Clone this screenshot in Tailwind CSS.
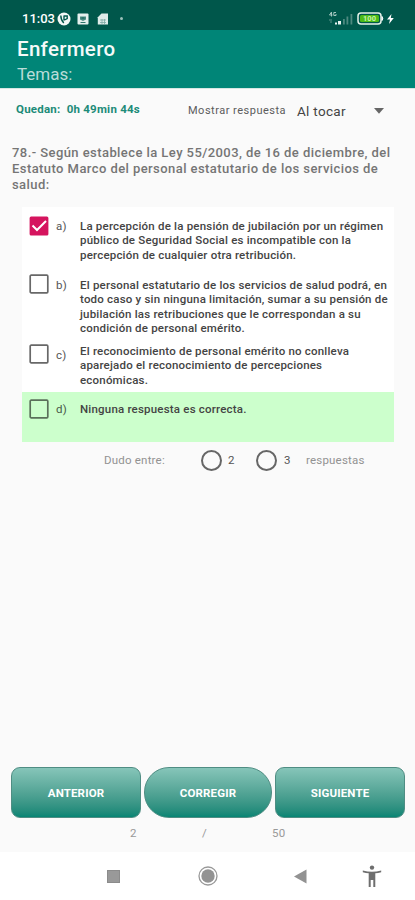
<!DOCTYPE html>
<html lang="es">
<head>
<meta charset="utf-8">
<title>Enfermero</title>
<script src="https://cdn.jsdelivr.net/npm/@tailwindcss/browser@4"></script>
</head>
<body class="bg-[#fafafa] font-[Roboto,sans-serif]">
<div class="w-[415px] h-[900px] flex flex-col overflow-hidden whitespace-nowrap">
  <div class="h-[30px] shrink-0 bg-[#00574b] text-white flex items-center pl-[22px] pr-[20px] pt-[7px]">
    <span class="text-[13px] leading-4 font-medium w-[34px]">11:03</span>
    <svg class="ml-[1px]" width="14" height="14" viewBox="0 0 14 14"><circle cx="7" cy="7" r="6.500" fill="#f2f8f6"/><path d="M3.800 3.500c0 3.500.6 5 3 7.500M7 3.500v5M7 4h3.200v2.500L7.500 8" stroke="#00574b" stroke-width="1.400" fill="none"/></svg>
    <svg class="ml-[6px]" width="12" height="12" viewBox="0 0 12 12"><rect x=".5" y=".5" width="11" height="11" rx="1" fill="#e5f0ee"/><path d="M3 3.500h6v3l-3 1.500-3-1.500z" fill="#4b8b82"/><path d="M4.500 5h3M3.500 9.500h5" stroke="#00574b" stroke-width=".8"/></svg>
    <svg class="ml-[8px]" width="12" height="12" viewBox="0 0 12 12"><path d="M4.500.5H11v11H.8V4.200z" fill="#dfecea"/><path d="M3 7h6M3 9.500h6M5 6v5M7.500 6v5" stroke="#7eaaa4" stroke-width=".8"/></svg>
    <span class="ml-[11px] size-[3px] rounded-full bg-[#9bc0ba]"></span>
    <svg class="ml-auto" width="26" height="15" viewBox="0 0 26 15"><path d="M3.500 1L1.500 4h3M3.500 1v4.500M8 1.500H5.800v3H8V3" stroke="#a5c6c0" fill="none" stroke-width="1"/><path d="M1 9h3M2 11h2" stroke="#5d948b"/><path d="M7 11.500h2v2H7zM10 10h3v3.500h-3z" fill="#e8f3f1"/><path d="M15 8h1.800v5.500H15zM18.500 5.500h1.800v8h-1.800zM22.500 3h1.800v10.500h-1.800z" fill="#4e8980"/></svg>
    <svg class="ml-[3px]" width="27" height="13" viewBox="0 0 27 13"><rect x="1" y="1" width="23" height="11" rx="3" fill="#00574b" stroke="#e6f2ea" stroke-width="1.500"/><rect x="3" y="3" width="19" height="7" rx="1.500" fill="#4cbb17"/><path d="M25 4.500q1.500 2 0 4z" fill="#fff" stroke="#fff"/><text x="12.500" y="9.200" font-size="7.500" font-weight="700" fill="#c8f5ac" text-anchor="middle">100</text></svg>
    <svg class="ml-[2px]" width="9" height="12" viewBox="0 0 9 12"><path d="M5.500 1L1 6.500h3L3 11l4.800-6H4.800z" fill="#fff"/></svg>
  </div>
  <div class="h-[58px] shrink-0 bg-[#008577] pl-[17px] pt-[7px]">
    <div class="text-[20.5px] leading-[25px] font-medium text-[#f4faf9] tracking-[0.3px]">Enfermero</div>
    <div class="text-[17px] leading-[24px] text-[#b9dcd8] tracking-[0px]">Temas:</div>
  </div>
  <div class="h-[57px] shrink-0 flex pl-[16px] border-t border-[#d5e6e3]">
    <div class="w-[172px] pt-[13px] text-[11.5px] leading-[14px] font-bold text-[#1c8b78] tracking-[0.23px] whitespace-pre">Quedan:  0h 49min 44s</div>
    <div class="w-[109px] pt-[15px] text-[11px] leading-[14px] text-[#5c5c5c] tracking-[0.5px]">Mostrar respuesta</div>
    <div class="w-[77px] pt-[13px] text-[13.5px] leading-[18px] text-[#444] tracking-[0.3px]">Al tocar</div>
    <svg class="mt-[19px]" width="10" height="6" viewBox="0 0 10 6"><path d="M0 0h10L5 5.800z" fill="#666"/></svg>
  </div>
  <div class="h-[62px] shrink-0 pl-[12px] text-[13px] leading-[16px] font-medium text-[#757575] tracking-[0.43px]">
    <div>78.- Según establece la Ley 55/2003, de 16 de diciembre, del</div>
    <div>Estatuto Marco del personal estatutario de los servicios de</div>
    <div>salud:</div>
  </div>
  <div class="w-[372px] ml-[22px] shrink-0 text-[11.5px] leading-[14.3px] font-medium text-[#444] tracking-[0.2px]">
    <div class="h-[67px] bg-white flex pt-[12px]">
      <svg class="ml-[7px] -mt-[3px]" width="20" height="20" viewBox="0 0 20 20"><rect x=".6" y=".6" width="18.800" height="18.800" rx="1.500" fill="#d5145e"/><path d="M3.500 9.500l4.500 4.500L17 5" fill="none" stroke="#fff" stroke-width="2"/></svg>
      <span class="ml-[7px] w-[24px] font-normal text-[#555]">a)</span>
      <div>La percepción de la pensión de jubilación por un régimen<br>público de Seguridad Social es incompatible con la<br>percepción de cualquier otra retribución.</div>
    </div>
    <div class="h-[68px] bg-white flex pt-[4px]">
      <svg class="ml-[7px] -mt-[4px]" width="20" height="20" viewBox="0 0 20 20"><rect x="1.200" y="1.200" width="17.600" height="17.600" rx="1" fill="none" stroke="#686868" stroke-width="1.700"/></svg>
      <span class="ml-[7px] w-[24px] font-normal text-[#555]">b)</span>
      <div>El personal estatutario de los servicios de salud podrá, en<br>todo caso y sin ninguna limitación, sumar a su pensión de<br>jubilación las retribuciones que le correspondan a su<br>condición de personal emérito.</div>
    </div>
    <div class="h-[50px] bg-white flex pt-[2px]">
      <svg class="ml-[7px]" width="20" height="20" viewBox="0 0 20 20"><rect x="1.200" y="1.200" width="17.600" height="17.600" rx="1" fill="none" stroke="#686868" stroke-width="1.700"/></svg>
      <span class="ml-[7px] w-[24px] font-normal text-[#555] pt-[4px]">c)</span>
      <div>El reconocimiento de personal emérito no conlleva<br>aparejado el reconocimiento de percepciones<br>económicas.</div>
    </div>
    <div class="h-[50px] bg-[#ccffcc] flex pt-[7px]">
      <svg class="ml-[7px]" width="20" height="20" viewBox="0 0 20 20"><rect x="1.200" y="1.200" width="17.600" height="17.600" rx="1" fill="none" stroke="#5a705a" stroke-width="1.700"/></svg>
      <span class="ml-[7px] w-[24px] font-normal text-[#485848] pt-[3px]">d)</span>
      <div class="pt-[3px]">Ninguna respuesta es correcta.</div>
    </div>
  </div>
  <div class="h-[36px] shrink-0 flex items-center pl-[104px] text-[11.5px] text-[#929292] tracking-[0.2px]">
    <span class="w-[97px] pt-px">Dudo entre:</span>
    <span class="size-[21px] rounded-full border-2 border-[#666]"></span>
    <span class="ml-[6px] w-[28px] pt-px text-[#555]">2</span>
    <span class="size-[21px] rounded-full border-2 border-[#666]"></span>
    <span class="ml-[7px] w-[22px] pt-px text-[#555]">3</span>
    <span class="pt-px">respuestas</span>
  </div>
  <div class="flex-1"></div>
  <div class="h-[51px] shrink-0 flex gap-[3px] pl-[11px] text-[11.5px] font-bold text-white tracking-[0.15px]">
    <div class="w-[130px] rounded-[9px] border border-[#4f8d83] bg-linear-to-b from-[#86c5b9] to-[#058574] flex items-center justify-center pt-[2px]"><span>ANTERIOR</span></div>
    <div class="w-[128px] rounded-[25px] border border-[#4f8d83] bg-linear-to-b from-[#86c5b9] to-[#058574] flex items-center justify-center pt-[2px]"><span>CORREGIR</span></div>
    <div class="w-[130px] rounded-[9px] border border-[#4f8d83] bg-linear-to-b from-[#86c5b9] to-[#058574] flex items-center justify-center pt-[2px]"><span>SIGUIENTE</span></div>
  </div>
  <div class="h-[34px] shrink-0 flex pt-[8px] pl-[130px] text-[11.5px] leading-[14px] text-[#999] tracking-[0.2px]">
    <span class="w-[72px]">2</span><span class="w-[70px]">/</span><span>50</span>
  </div>
  <div class="h-[48px] shrink-0 bg-white flex items-center pl-[107px]">
    <span class="size-[13px] bg-[#999] border border-[#8b8b8b]"></span>
    <svg class="ml-[78px]" width="20" height="20" viewBox="0 0 20 20"><circle cx="10" cy="10" r="9" fill="none" stroke="#999" stroke-width="1.300"/><circle cx="10" cy="10" r="6.700" fill="#939393"/></svg>
    <svg class="ml-[76px]" width="13" height="15" viewBox="0 0 13 15"><path d="M0 7.500L12.500.5v14z" fill="#929292"/></svg>
    <svg class="ml-[55px]" width="20" height="23" viewBox="0 0 20 23"><circle cx="10" cy="2.600" r="2.200" fill="#6e6e6e"/><path d="M.8 5.500Q10 8 19.200 5.500v1.700Q16 8 13.300 8.200V22h-2v-7H8.700v7h-2V8.200Q4 8 .8 7.200z" fill="#6e6e6e"/></svg>
  </div>
</div>
</body>
</html>
